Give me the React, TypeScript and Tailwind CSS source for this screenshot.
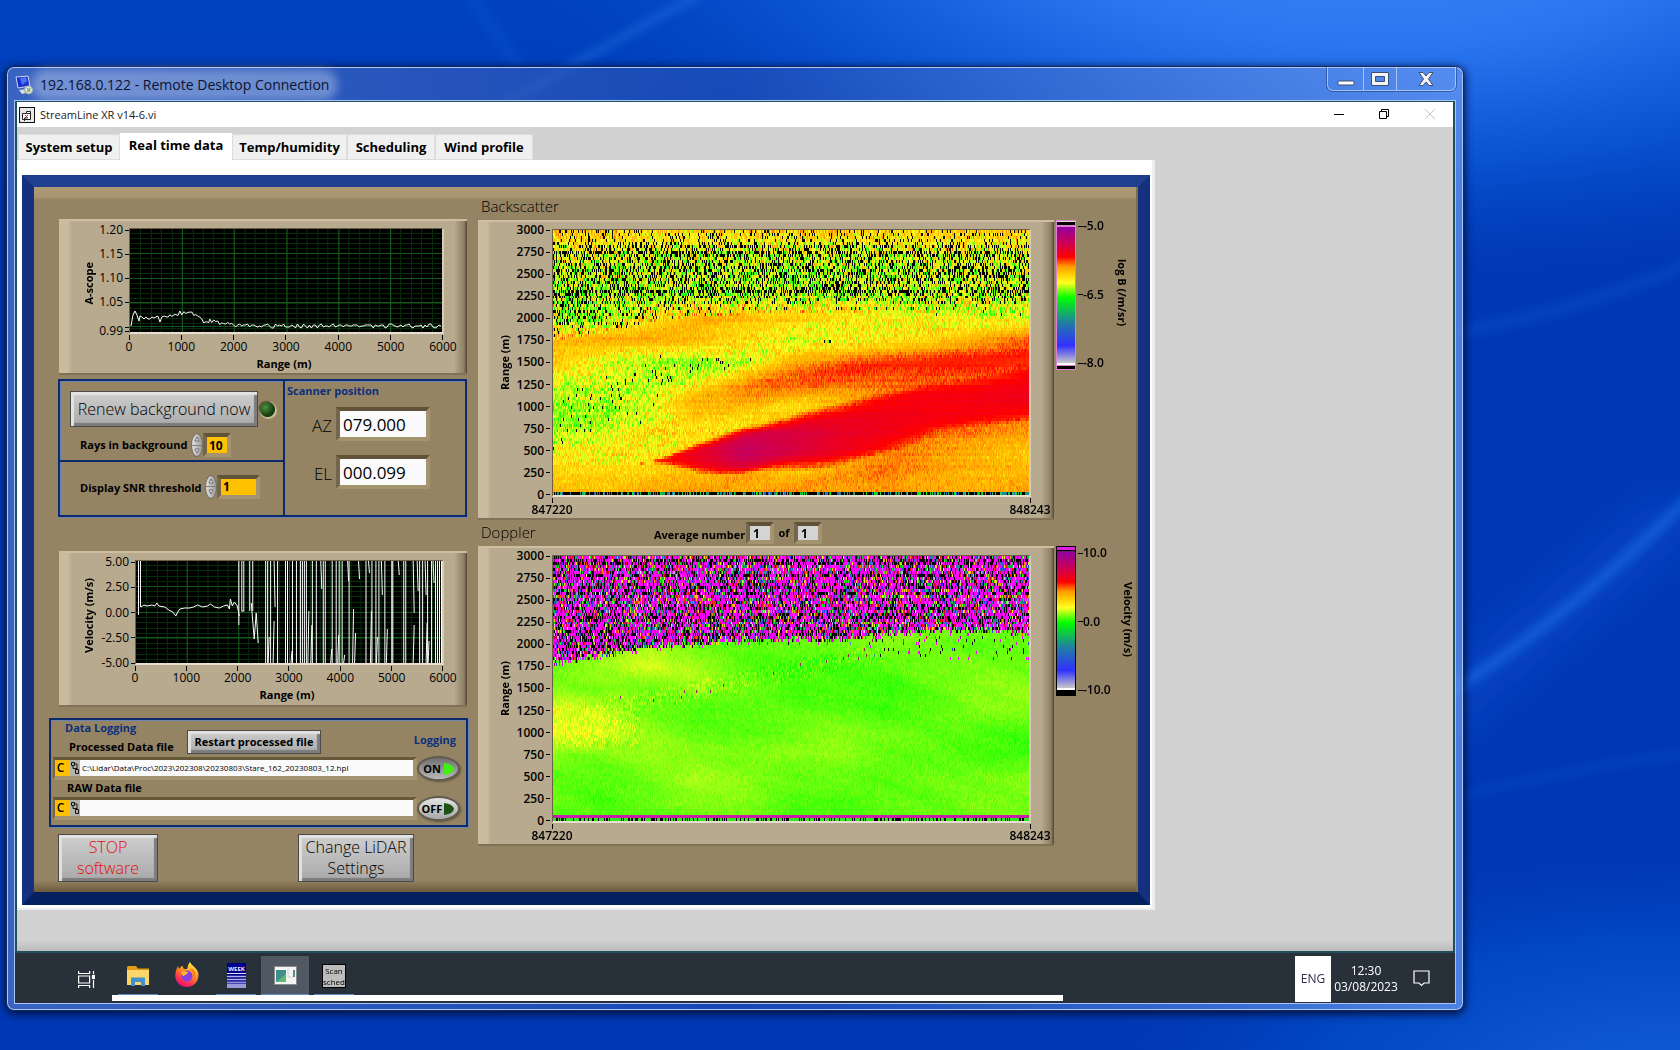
import { useEffect, useRef, type ReactNode } from "react";

/* ---------- colour ramp and synthetic lidar fields ---------- */

type Rgb = [number, number, number];

const RAMP: [number, Rgb][] = [
  [0, [145, 0, 160]],
  [0.1, [200, 0, 90]],
  [0.22, [255, 0, 0]],
  [0.3, [255, 150, 0]],
  [0.35, [255, 200, 0]],
  [0.41, [255, 255, 32]],
  [0.52, [0, 255, 0]],
  [0.7, [32, 128, 160]],
  [0.87, [48, 48, 255]],
  [1, [215, 215, 215]],
];

function ramp(p: number): Rgb {
  const v = Math.min(1, Math.max(0, p));
  for (let i = 1; i < RAMP.length; i++) {
    const [p1, c1] = RAMP[i];
    const [p0, c0] = RAMP[i - 1];
    if (v <= p1) {
      const f = (v - p0) / (p1 - p0);
      return [c0[0] + (c1[0] - c0[0]) * f, c0[1] + (c1[1] - c0[1]) * f, c0[2] + (c1[2] - c0[2]) * f];
    }
  }
  return [215, 215, 215];
}

function lerpTable(t: number[], x: number): number {
  const s = Math.min(1, Math.max(0, x)) * (t.length - 1);
  const i = Math.min(t.length - 2, Math.floor(s));
  return t[i] + (t[i + 1] - t[i]) * (s - i);
}

function grid(rows: number[][], x: number, range: number): number {
  const s = (range / 3000) * (rows.length - 1);
  const i = Math.min(rows.length - 2, Math.max(0, Math.floor(s)));
  const a = lerpTable(rows[i], x);
  const b = lerpTable(rows[i + 1], x);
  return a + (b - a) * (s - i);
}

/* rows every 250 m, ground first; columns every 10 % of the time axis */
const BACKSCATTER = [
  [0.32, 0.33, 0.31, 0.31, 0.31, 0.3, 0.31, 0.31, 0.33, 0.33, 0.3],
  [0.37, 0.37, 0.36, 0.34, 0.33, 0.35, 0.32, 0.29, 0.31, 0.34, 0.34],
  [0.4, 0.4, 0.38, 0.35, 0.33, 0.32, 0.3, 0.29, 0.3, 0.32, 0.34],
  [0.45, 0.43, 0.39, 0.38, 0.37, 0.35, 0.32, 0.29, 0.28, 0.29, 0.31],
  [0.47, 0.47, 0.42, 0.36, 0.37, 0.37, 0.35, 0.3, 0.28, 0.27, 0.27],
  [0.42, 0.43, 0.43, 0.41, 0.35, 0.3, 0.29, 0.28, 0.27, 0.27, 0.27],
  [0.35, 0.4, 0.45, 0.46, 0.42, 0.36, 0.33, 0.31, 0.29, 0.28, 0.27],
  [0.35, 0.33, 0.32, 0.34, 0.39, 0.43, 0.42, 0.4, 0.37, 0.34, 0.29],
  [0.45, 0.44, 0.37, 0.33, 0.33, 0.35, 0.37, 0.39, 0.41, 0.4, 0.41],
  [0.46, 0.45, 0.44, 0.43, 0.44, 0.44, 0.44, 0.43, 0.43, 0.43, 0.42],
  [0.43, 0.43, 0.43, 0.43, 0.44, 0.44, 0.43, 0.43, 0.42, 0.42, 0.42],
  [0.41, 0.41, 0.42, 0.42, 0.42, 0.42, 0.42, 0.42, 0.41, 0.41, 0.4],
  [0.35, 0.35, 0.36, 0.36, 0.36, 0.36, 0.36, 0.36, 0.36, 0.36, 0.36],
];

const DOPPLER = [
  [0.48, 0.49, 0.48, 0.48, 0.48, 0.49, 0.49, 0.48, 0.48, 0.47, 0.47],
  [0.48, 0.49, 0.48, 0.46, 0.46, 0.48, 0.49, 0.48, 0.48, 0.47, 0.47],
  [0.48, 0.48, 0.47, 0.45, 0.46, 0.48, 0.47, 0.48, 0.47, 0.47, 0.46],
  [0.46, 0.47, 0.45, 0.46, 0.47, 0.46, 0.46, 0.48, 0.48, 0.49, 0.5],
  [0.42, 0.42, 0.46, 0.48, 0.48, 0.47, 0.46, 0.47, 0.48, 0.49, 0.49],
  [0.42, 0.43, 0.47, 0.49, 0.48, 0.48, 0.48, 0.49, 0.48, 0.46, 0.46],
  [0.46, 0.47, 0.47, 0.45, 0.47, 0.49, 0.49, 0.5, 0.48, 0.46, 0.46],
  [0.48, 0.45, 0.43, 0.45, 0.48, 0.49, 0.49, 0.48, 0.47, 0.47, 0.47],
  [0.47, 0.46, 0.44, 0.48, 0.48, 0.48, 0.47, 0.46, 0.47, 0.48, 0.48],
  [0.46, 0.46, 0.46, 0.46, 0.46, 0.46, 0.46, 0.46, 0.46, 0.46, 0.46],
  [0.46, 0.46, 0.46, 0.46, 0.46, 0.46, 0.46, 0.46, 0.46, 0.46, 0.46],
];

const PLUME_CENTRE = [300, 340, 370, 420, 500, 580, 680, 820, 980, 1080, 1160];
const PLUME_HALF = [0, 0, 10, 150, 215, 235, 300, 340, 350, 330, 310];
const PLUME_PEAK = [0.3, 0.3, 0.25, 0.18, 0.1, 0.13, 0.17, 0.19, 0.2, 0.2, 0.19];
const BAND_CENTRE = [1000, 1000, 1020, 1080, 1180, 1370, 1440, 1490, 1530, 1560, 1600];
const BAND_DEPTH = [0, 0, 0, 0.04, 0.06, 0.06, 0.065, 0.065, 0.055, 0.05, 0.04];
const NOISE_FLOOR = [1780, 1870, 1960, 2000, 2030, 2040, 2050, 2100, 2150, 2150, 2120];
const NOISE_TOP = [1750, 1820, 1950, 2020, 2040, 2050, 2050, 2080, 2060, 2030, 2060];

const COLS = 478;
const ROWS = 89;

function makeRandom(seed: number) {
  let s = seed;
  return () => {
    s = (s * 1664525 + 1013904223) % 4294967296;
    return s / 4294967296;
  };
}

function wisps(x: number, range: number, slope: number): number {
  const u = range - slope * x;
  return (
    Math.sin(u / 61 + 3 * Math.sin(x * 7)) * 0.45 +
    Math.sin(u / 113 + 2.2 * Math.sin(x * 11 + 1)) * 0.35 +
    Math.sin(u / 33 + 4 * Math.sin(x * 5 + 2)) * 0.2
  );
}

type Kind = "backscatter" | "doppler";

function cellColour(kind: Kind, x: number, row: number, rnd: () => number, rowBias: number): Rgb {
  const range = 3000 * (1 - (row + 0.5) / ROWS);
  const n = rnd() + rnd() - 1;
  if (kind === "backscatter") {
    if (row === ROWS - 1) return rnd() < 0.55 ? [0, 0, 0] : ramp(0.52 + rnd() * 0.25);
    const above = (range - lerpTable(NOISE_TOP, x)) / 200;
    let p = grid(BACKSCATTER, x, range);
    const band = Math.abs(range - lerpTable(BAND_CENTRE, x)) / 200;
    p -= lerpTable(BAND_DEPTH, x) * Math.exp(-band * band * 1.2);
    p = Math.max(p, 0.24);
    if (above < 0.5) p += wisps(x, range, 900) * 0.012;
    const half = lerpTable(PLUME_HALF, x);
    if (half > 8) {
      const d = Math.abs(range - lerpTable(PLUME_CENTRE, x) + wisps(x, range, 900) * 30) / half;
      p = Math.min(p, lerpTable(PLUME_PEAK, x) + 0.09 * Math.pow(d, 3));
    }
    let amp = p > 0.375 ? 0.08 : p > 0.24 ? 0.04 : 0.012;
    let hole = p > 0.43 ? 0.035 : p > 0.41 ? 0.012 : 0;
    if (above > 0) {
      amp = 0.14;
      hole = Math.min(0.28, above * 0.2) + rowBias * 0.08;
      if (range > 2820) {
        hole *= 0.5;
        amp = 0.1;
      }
      if (row === 20 || row === 7) hole = 0.5;
    }
    if (rnd() < hole) return [0, 0, 0];
    return ramp(p + n * amp + rowBias * 0.008);
  }
  if (row === ROWS - 1) return rnd() < 0.35 ? [0, 0, 0] : [48, 230, 32];
  if (row === ROWS - 2) return [200, 30, 170];
  const floor = lerpTable(NOISE_FLOOR, x) + n * 60;
  const thin = x > 0.66 && range > 1800 + (1 - x) * 200 && rnd() < 0.07;
  if (range > floor || thin) {
    const r = rnd();
    if (r < 0.4) return [255, 0, 255];
    if (r < 0.67 + rowBias * 0.15) return [0, 0, 0];
    return ramp(rnd());
  }
  const speckle = Math.abs(range - (1150 + x * 1100)) < 110 && x > 0.1 && x < 0.7;
  if (speckle && rnd() < 0.01) return [150, 40, 90];
  const yellow = x < 0.18 && range > 850 && range < 1350;
  const p = grid(DOPPLER, x, Math.min(3000, range * 1.2)) + wisps(x, range, -1400) * 0.006;
  return ramp(p + n * (speckle || yellow ? 0.035 : 0.016));
}

function HeatMap({ kind, label }: { kind: Kind; label: string }) {
  const ref = useRef<HTMLCanvasElement>(null);
  useEffect(() => {
    const ctx = ref.current?.getContext("2d");
    if (!ctx) return;
    const rnd = makeRandom(kind === "doppler" ? 91 : 17);
    const img = ctx.createImageData(COLS, ROWS);
    for (let y = 0; y < ROWS; y++) {
      const bias = rnd() * 2 - 1;
      for (let x = 0; x < COLS; x++) {
        const c = cellColour(kind, x / COLS, y, rnd, bias);
        const o = (y * COLS + x) * 4;
        img.data[o] = c[0];
        img.data[o + 1] = c[1];
        img.data[o + 2] = c[2];
        img.data[o + 3] = 255;
      }
    }
    ctx.putImageData(img, 0, 0);
  }, [kind]);
  return (
    <canvas
      ref={ref}
      width={COLS}
      height={ROWS}
      role="img"
      aria-label={label}
      className="h-[268px] w-full border-t border-l border-[#6b5f48] border-r-2 border-r-[#d6cdb8] border-b-2 border-b-[#e6e0d0] [image-rendering:pixelated]"
    />
  );
}

/* ---------- instrument chrome ---------- */

const PANEL =
  "border-t-2 border-b-2 border-t-[#cdbf9f] border-b-[#807256] bg-[linear-gradient(90deg,#c9bb9d_0,#c9bb9d_9px,#b7aa8e_13px,#b7aa8e_calc(100%_-_13px),#8d8064_calc(100%_-_3px),#4f4634_100%)]";
const STEEL =
  "border border-[#4a4a4a] bg-linear-to-b from-[#cfcfcf] to-[#a9a9a9] shadow-[inset_3px_3px_1px_#e2e2e2,inset_-3px_-3px_1px_#7c7c7c]";
const WELL = "border-4 border-t-[#5f5238] border-l-[#73664a] border-r-[#a3946f] border-b-[#a3946f]";

function XAxis({ labels }: { labels: string[] }) {
  return (
    <div className="flex justify-between pt-px pr-px">
      {labels.map((l) => (
        <div key={l} className="flex w-0 flex-col items-center">
          <span className="h-[5px] w-px shrink-0 bg-black" />
          <span className="text-xs leading-[14px]">{l}</span>
        </div>
      ))}
    </div>
  );
}

function YLabel({ text, bold }: { text: string; bold?: boolean }) {
  return (
    <div className={`flex h-4 items-center justify-end gap-[2px] text-xs leading-4 ${bold ? "font-semibold" : ""}`}>
      <span>{text}</span>
      <span className="h-px w-1 bg-black" />
    </div>
  );
}

function VText({ children, down }: { children: ReactNode; down?: boolean }) {
  return (
    <span
      className={`text-[11px] leading-4 font-bold whitespace-nowrap [writing-mode:vertical-rl] ${down ? "" : "rotate-180"}`}
    >
      {children}
    </span>
  );
}

function PlotGrid({ w, h, minorX, major, minorPer }: { w: number; h: number; minorX: number; major: number[]; minorPer: number }) {
  const lines: ReactNode[] = [];
  const step = major[1] - major[0];
  for (let y = major[0] - step; y < h; y += step / minorPer)
    if (y > 0) lines.push(<path key={`h${y}`} d={`M0 ${Math.round(y) + 0.5}H${w}`} stroke="#062c09" />);
  for (let i = 1; i < minorX; i++) {
    const x = Math.round((w * i) / minorX) + 0.5;
    lines.push(<path key={`v${i}`} d={`M${x} 0V${h}`} stroke={i % 5 === 0 ? "#166b1c" : "#082e0b"} />);
  }
  major.forEach((y) => lines.push(<path key={`m${y}`} d={`M0 ${y + 0.5}H${w}`} stroke="#15591a" />));
  return <g shapeRendering="crispEdges">{lines}</g>;
}

const PLOT =
  "block w-full border-t border-l border-[#6b5f48] border-r-2 border-r-[#d6cdb8] border-b-2 border-b-[#e6e0d0] bg-black";

function scopeTrace(): string {
  const rnd = makeRandom(5);
  const pts: string[] = ["1,97", "3,86", "5,82", "7,86", "9,92", "10,87"];
  const key: [number, number][] = [[12, 89], [28, 89], [30, 92], [34, 88], [44, 86], [50, 84], [62, 83], [68, 87], [75, 94], [80, 91], [92, 94], [104, 97], [313, 97]];
  for (let i = 1; i < key.length; i++) {
    const [x0, y0] = key[i - 1];
    const [x1, y1] = key[i];
    for (let x = x0; x < x1; x += 2) {
      const y = y0 + ((y1 - y0) * (x - x0)) / (x1 - x0) + Math.round((rnd() - 0.5) * 4);
      pts.push(`${x},${y}`);
    }
  }
  return pts.join(" ");
}

function AScope() {
  return (
    <section className={`flex h-[156px] pl-[22px] ${PANEL}`}>
      <div className="flex h-[124px] w-4 items-center justify-center">
        <VText>A-scope</VText>
      </div>
      <div className="w-8 pt-px">
        <div className="flex h-[88px] flex-col justify-between">
          {["1.20", "1.15", "1.10", "1.05"].map((l) => (
            <YLabel key={l} text={l} />
          ))}
        </div>
        <div className="mt-[13px] flex h-4 items-center justify-end gap-[2px] text-xs leading-4">
          <span>0.99</span>
          <span className="flex flex-col gap-[3px] pb-1">
            <span className="h-px w-1 bg-black" />
            <span className="h-px w-1 bg-black" />
          </span>
        </div>
      </div>
      <div className="mr-[23px] flex-1 pt-[7px]">
        <svg viewBox="0 0 313 103" preserveAspectRatio="none" className={`h-[106px] ${PLOT}`} role="img" aria-label="A-scope trace">
          <PlotGrid w={313} h={103} minorX={30} major={[24, 49, 73, 97]} minorPer={5} />
          <polyline points={scopeTrace()} fill="none" stroke="#fff" strokeWidth="1" />
        </svg>
        <XAxis labels={["0", "1000", "2000", "3000", "4000", "5000", "6000"]} />
        <p className="pt-[2px] pr-[5px] text-center text-[11px] leading-4 font-bold">Range (m)</p>
      </div>
    </section>
  );
}

const FULL_BARS = [
  2, 4, 103, 106, 108, 114, 117, 130, 132, 135, 142, 150, 152, 157, 161, 165, 167, 169, 171, 177, 181, 188, 190, 197,
  201, 204, 207, 214, 231, 237, 241, 244, 250, 257, 258, 269, 271, 285, 288, 293, 297, 301, 303, 305, 307,
];
const TOP_BARS: [number, number][] = [
  [139, 46], [186, 28], [213, 20], [224, 18], [234, 12], [247, 34], [264, 14], [279, 52], [283, 30], [291, 34], [299, 22],
];
const LOW_BARS: [number, number][] = [
  [133, 76], [138, 60], [156, 90], [173, 50], [176, 64], [196, 88], [203, 74], [209, 94], [218, 48], [220, 72], [236, 50],
  [242, 76], [252, 68], [279, 64], [292, 62], [294, 80],
];

function Velocity() {
  return (
    <section className={`flex h-[156px] pl-[22px] ${PANEL}`}>
      <div className="flex h-[124px] w-4 items-center justify-center">
        <VText>Velocity (m/s)</VText>
      </div>
      <div className="w-[38px] pt-px">
        <div className="flex h-[117px] flex-col justify-between">
          {["5.00", "2.50", "0.00", "-2.50", "-5.00"].map((l) => (
            <YLabel key={l} text={l} />
          ))}
        </div>
      </div>
      <div className="mr-[23px] flex-1 pt-[7px]">
        <svg viewBox="0 0 308 102" preserveAspectRatio="none" className={`h-[105px] ${PLOT}`} role="img" aria-label="Velocity trace">
          <PlotGrid w={308} h={102} minorX={30} major={[25, 51, 76]} minorPer={5} />
          <g stroke="#fff" strokeWidth="1" fill="none">
            {FULL_BARS.map((x) => (
              <path key={x} d={x === 2 ? "M2.5 0V54" : x === 4 ? "M4.5 0V46" : x < 120 ? `M${x}.5 0V${x === 103 ? 64 : 50}` : `M${x}.5 0V102`} shapeRendering="crispEdges" />
            ))}
            {TOP_BARS.map(([x, y]) => (
              <path key={x} d={`M${x} 0L${x + 1} ${y}`} shapeRendering="crispEdges" />
            ))}
            {LOW_BARS.map(([x, y]) => (
              <path key={x} d={`M${x + 1} ${y}L${x} 102`} shapeRendering="crispEdges" />
            ))}
            <path d="M5 46l3-2 3 1 5-1 3 1 2-3 2 3 6 1 4 3 4 2 3 4 2-4 2-3 5-1h5l4-1 4-2 5 2 5-1 3-2 4 3 5 1 4-2 4-1 2 4 1-10 2 7 2-4 3 4 2 10" />
            <path d="M106 50h3M116 42l3 36 2-26 2 30" />
          </g>
        </svg>
        <XAxis labels={["0", "1000", "2000", "3000", "4000", "5000", "6000"]} />
        <p className="pt-[2px] pr-[5px] text-center text-[11px] leading-4 font-bold">Range (m)</p>
      </div>
    </section>
  );
}

const FRAME = "border-2 border-[#0b2a6e] shadow-[inset_1px_1px_0_#6c83b4,1px_1px_0_#6c83b4]";

function Spinner({ label }: { label: string }) {
  return (
    <div className="flex h-6 w-3 flex-col overflow-hidden rounded-[50%] border border-[#77705f] bg-linear-to-r from-[#e0e0e0] to-[#9c9c9c]">
      <button type="button" aria-label={`Increase ${label}`} className="flex flex-1 items-center justify-center border-b border-[#808080]">
        <svg viewBox="0 0 6 6" className="size-[6px]"><path d="M3 1L5 5H1z" fill="#eee" stroke="#555" strokeWidth=".8" /></svg>
      </button>
      <button type="button" aria-label={`Decrease ${label}`} className="flex flex-1 items-center justify-center">
        <svg viewBox="0 0 6 6" className="size-[6px]"><path d="M3 5L5 1H1z" fill="#eee" stroke="#555" strokeWidth=".8" /></svg>
      </button>
    </div>
  );
}

function Controls() {
  return (
    <section className={`flex h-[138px] ${FRAME}`}>
      <div className="flex w-[225px] flex-col border-r-2 border-[#0b2a6e]">
        <div className="h-[81px] border-b-2 border-[#0b2a6e] pt-[10px] pl-[10px]">
          <div className="flex items-center gap-[2px]">
            <button type="button" className={`h-9 w-[188px] text-base leading-4 font-light whitespace-nowrap ${STEEL}`}>
              Renew background now
            </button>
            <span className="size-[15px] rounded-full bg-[radial-gradient(circle_at_35%_35%,#4f9040,#14400f_60%,#0b2808)] shadow-[1px_1px_1px_1px_#cbbd96,-1px_-1px_1px_#4a4028]" />
          </div>
          <div className="flex items-center pt-[6px] pl-[10px]">
            <label htmlFor="rays" className="w-[111px] text-[11px] font-bold whitespace-nowrap">Rays in background</label>
            <Spinner label="rays in background" />
            <input id="rays" defaultValue="10" className={`h-6 w-7 bg-[#ffc000] pl-[2px] text-xs font-bold ${WELL}`} />
          </div>
        </div>
        <div className="flex flex-1 items-center pb-1 pl-5">
          <label htmlFor="snr" className="w-[125px] pt-1 text-[11px] font-bold whitespace-nowrap">Display SNR threshold</label>
          <Spinner label="display SNR threshold" />
          <input id="snr" defaultValue="1" className={`h-6 w-[43px] bg-[#ffc000] pl-[2px] text-xs font-bold ${WELL}`} />
        </div>
      </div>
      <div className="flex-1 pl-[2px]">
        <h2 className="pt-[2px] text-[11px] leading-4 font-bold text-[#0c2f7d]">Scanner position</h2>
        {[
          ["AZ", "079.000"],
          ["EL", "000.099"],
        ].map(([k, v]) => (
          <div key={k} className={`flex items-center gap-1 ${k === "AZ" ? "pt-2" : "pt-[14px]"}`}>
            <label htmlFor={k} className="w-[45px] pt-1 text-right text-[17px] leading-6 font-light">{k}</label>
            <input id={k} readOnly value={v} className={`h-[34px] w-[94px] bg-[#fafafa] pl-[3px] text-[17px] leading-6 ${WELL}`} />
          </div>
        ))}
      </div>
    </section>
  );
}

function FileRow({ id, value, on }: { id: string; value: string; on: boolean }) {
  return (
    <div className="flex h-[25px] items-center">
      <div className="flex h-[23px] flex-1 border-t-[3px] border-r-4 border-b-4 border-l-2 border-t-[#665939] border-r-[#a3946f] border-b-[#a3946f] border-l-[#73664a] bg-[#958464]">
        <button type="button" aria-label={`Choose drive for ${id}`} className="w-[15px] bg-[#ffc000] pr-1 text-xs leading-4 font-semibold">C</button>
        <svg viewBox="0 0 10 16" className="h-4 w-[10px] bg-[#b5b2aa]" aria-hidden="true">
          <path d="M1.500 2.500h3v3h-3zM5.500 9.500h3v4h-3zM4.500 4h2.500v5.500M3 5.500v3h4" fill="none" stroke="#111" strokeWidth="1" />
        </svg>
        <input id={id} readOnly value={value} className="h-4 min-w-0 flex-1 bg-[#fafafa] pl-[2px] text-[8px] leading-4 font-medium" />
      </div>
      <button
        type="button"
        aria-pressed={on}
        className={`flex h-[25px] w-[43px] items-center rounded-[50%] border-2 border-[#5e5a50] pl-[2px] font-bold ${on ? "bg-linear-to-b from-[#6f6f6f] to-[#b9b9b9]" : "bg-linear-to-b from-[#e6e6e6] to-[#a8a8a8]"} shadow-[1px_1px_2px_#5f5238]`}
      >
        <span className="w-[22px] text-center text-[11px] leading-4">{on ? "ON" : "OFF"}</span>
        <svg viewBox="0 0 12 14" className="h-[14px] w-3" aria-hidden="true">
          <path d="M1 1Q10 2 11 7Q10 12 1 13z" fill={on ? "#3ff010" : "#1c5214"} />
        </svg>
      </button>
    </div>
  );
}

function Logging() {
  return (
    <section className={`h-[109px] pr-[6px] pl-[2px] ${FRAME}`}>
      <div className="flex h-9 items-end">
        <div className="h-full w-[134px] pl-3">
          <h2 className="text-[11px] leading-4 font-bold text-[#0c2f7d]">Data Logging</h2>
          <label htmlFor="processed" className="block pt-[3px] pl-1 text-[11px] leading-4 font-bold whitespace-nowrap">Processed Data file</label>
        </div>
        <button type="button" className={`mb-[2px] h-6 w-[134px] text-[11px] leading-4 font-bold whitespace-nowrap ${STEEL}`}>
          Restart processed file
        </button>
        <span className="mr-1 mb-2 ml-auto text-[11px] leading-4 font-bold text-[#0c2f7d]">Logging</span>
      </div>
      <FileRow id="processed" value="C:\Lidar\Data\Proc\2023\202308\20230803\Stare_162_20230803_12.hpl" on />
      <label htmlFor="raw" className="block h-[15px] pl-[14px] text-[11px] leading-[14px] font-bold">RAW Data file</label>
      <FileRow id="raw" value="" on={false} />
    </section>
  );
}

const RANGES = ["3000", "2750", "2500", "2250", "2000", "1750", "1500", "1250", "1000", "750", "500", "250", "0"];

function MapPanel({ kind, label, top, bar, ticks, unit, unitPad, barClass }: {
  kind: Kind; label: string; top: string; bar: ReactNode; ticks: string[]; unit: string; unitPad: string; barClass: string;
}) {
  return (
    <div className="flex">
      <section className={`flex h-[300px] flex-1 pl-[19px] ${PANEL}`}>
        <div className="flex h-[280px] w-4 items-center justify-center">
          <VText>{label}</VText>
        </div>
        <div className="flex h-[281px] w-[37px] flex-col justify-between">
          {RANGES.map((r) => (
            <YLabel key={r} text={r} bold />
          ))}
        </div>
        <div className="mr-[23px] ml-[2px] flex-1 pt-[7px]">
          <HeatMap kind={kind} label={top} />
          <div className="font-semibold">
            <XAxis labels={["847220", "848243"]} />
          </div>
        </div>
      </section>
      <div className="flex w-[82px] pl-[2px]">
        {bar}
        <div className={`flex h-[153px] w-9 flex-col justify-between pl-[2px] text-xs leading-4 font-semibold ${barClass}`}>
          {ticks.map((t) => (
            <div key={t} className="flex items-center">
              <span className="h-px w-[5px] shrink-0 bg-black" />
              <span className="whitespace-nowrap">{t}</span>
            </div>
          ))}
        </div>
        <div className={`flex h-[146px] items-center ${unitPad}`}>
          <VText down>{unit}</VText>
        </div>
      </div>
    </div>
  );
}

const BAR_FILL =
  "bg-[linear-gradient(180deg,#9100a0_0%,#c8005a_11%,#ff0000_22%,#ff9a00_29%,#ffc800_34%,#ffff20_41%,#00ff00_52%,#2080a0_70%,#3030ff_87%,#c8c8c8_100%)]";

function Instrument() {
  return (
    <div className="border-[12px] border-b-[13px] border-t-[#20408f] border-r-[#15307f] border-b-[#04205f] border-l-[#15307f] shadow-[inset_0_1px_0_#000]">
      <div className="flex gap-[10px] border-r-2 border-[#7b6c4c] bg-[linear-gradient(180deg,#ad9b75_0,#a79570_10px,#958464_13px,#958464_calc(100%_-_12px),#6a5a3a_100%)] pb-[10px] pl-[15px] text-black">
        <div className="flex w-[419px] flex-col">
          <div className="mr-px ml-[10px] pt-8">
            <AScope />
          </div>
          <div className="mt-1 mr-px ml-[9px]">
            <Controls />
          </div>
          <div className="mt-[34px] mr-px ml-[10px]">
            <Velocity />
          </div>
          <div className="mt-[11px]">
            <Logging />
          </div>
          <div className="mt-[7px] mr-[54px] ml-[9px] flex justify-between">
            <button type="button" className={`h-12 w-[100px] text-base leading-[21px] font-light text-[#e01010] ${STEEL}`}>
              STOP<br />software
            </button>
            <button type="button" className={`h-12 w-[116px] text-base leading-[21px] font-light ${STEEL}`}>
              Change LiDAR<br />Settings
            </button>
          </div>
        </div>
        <div className="flex-1">
          <h2 className="h-[33px] pt-[9px] pl-[3px] text-[15px] leading-5 font-light">Backscatter</h2>
          <MapPanel
            kind="backscatter" label="Range (m)" top="Backscatter time-height plot" ticks={["-5.0", "-6.5", "-8.0"]} unit="log B (/m/sr)" barClass="-mt-[2px]" unitPad="pl-[2px]"
            bar={
              <div className="flex h-[150px] w-5 flex-col border border-[#e080d0]">
                <span className="h-1 border-t border-[#ddd] bg-black" />
                <span className="h-[2px] bg-[#e080d0]" />
                <span className={`flex-1 ${BAR_FILL}`} />
                <span className="h-[2px] bg-white" />
                <span className="h-px bg-[#e080d0]" />
                <span className="h-[3px] bg-black" />
              </div>
            }
          />
          <div className="flex h-[26px] items-center">
            <h2 className="w-[176px] pb-[2px] pl-[3px] text-[15px] leading-5 font-light">Doppler</h2>
            <label htmlFor="avg" className="w-[92px] pt-1 text-[11px] leading-4 font-bold whitespace-nowrap">Average number</label>
            <input id="avg" readOnly value="1" className={`h-[22px] w-7 bg-[#d4d4d4] pl-[3px] text-xs leading-3 font-bold ${WELL}`} />
            <label htmlFor="total" className="w-5 text-center text-[11px] leading-4 font-bold">of</label>
            <input id="total" readOnly value="1" className={`h-[22px] w-7 bg-[#d4d4d4] pl-[3px] text-xs leading-3 font-bold ${WELL}`} />
          </div>
          <MapPanel
            kind="doppler" label="Range (m)" top="Doppler time-height plot" ticks={["10.0", "0.0", "-10.0"]} unit="Velocity (m/s)" barClass="-mt-px" unitPad="pl-2"
            bar={
              <div className="flex h-[150px] w-5 flex-col border border-black">
                <span className="h-[3px] bg-[#e020e0]" />
                <span className="h-[2px] border-t border-black bg-[#6a1a6a]" />
                <span className={`flex-1 ${BAR_FILL}`} />
                <span className="h-[2px] bg-white" />
                <span className="h-[5px] bg-black" />
              </div>
            }
          />
        </div>
      </div>
    </div>
  );
}

/* ---------- windows and desktop ---------- */

const TABS: [string, string][] = [
  ["System setup", "w-[102px]"],
  ["Real time data", "w-[112px]"],
  ["Temp/humidity", "w-[115px]"],
  ["Scheduling", "w-[88px]"],
  ["Wind profile", "w-[98px]"],
];

function Tabs() {
  return (
    <div role="tablist" className="flex h-[27px] items-end pl-px">
      {TABS.map(([t, w]) =>
        t === "Real time data" ? (
          <button key={t} role="tab" aria-selected="true" type="button" className={`h-[27px] bg-white pb-1 text-[13px] leading-5 font-bold whitespace-nowrap ${w}`}>
            {t}
          </button>
        ) : (
          <button key={t} role="tab" aria-selected="false" type="button" className={`h-[26px] border border-b-[#ddd] border-[#dcdcdc] bg-[#f0f0f0] text-[13px] leading-5 font-bold whitespace-nowrap ${w}`}>
            {t}
          </button>
        ),
      )}
    </div>
  );
}

function Taskbar() {
  return (
    <footer className="-mx-[2px] flex h-[50px] items-start bg-[#28303a] text-white">
      <div className="relative flex h-full flex-1 pt-[3px]">
        <button type="button" aria-label="Task view" className="mr-[22px] ml-[61px] flex w-5 items-center justify-center">
          <svg viewBox="0 0 17 17" className="size-[17px]" fill="none" stroke="#fff" strokeWidth="1.200">
            <path d="M.6 0v2.500h11V0M.6 17v-2.500h11V17M.6 5h11v7H.6zM15.500 0v3M15.500 9v8" />
            <rect x="14.500" y="4.500" width="2" height="3" fill="#fff" />
          </svg>
        </button>
        <button type="button" aria-label="File Explorer" className="h-10 w-10 border-b-2 border-[#5d8fc7] pt-px">
          <svg viewBox="0 0 22 20" className="mx-auto h-5 w-[22px]">
            <path d="M0 1.500Q0 0 1.500 0H9l2 2.500h11V19H0z" fill="#e39a14" />
            <path d="M0 4h22v15H0z" fill="#fbd76b" />
            <path d="M4 20v-8.500h14V20h-4v-4H8v4z" fill="#3f92cd" />
          </svg>
        </button>
        <button type="button" aria-label="Firefox" className="ml-[9px] h-10 w-10 pb-1">
          <svg viewBox="0 0 24 25" className="mx-auto h-[25px] w-6">
            <defs>
              <linearGradient id="fox" x1=".8" y1="0" x2=".3" y2="1">
                <stop offset="0" stopColor="#fff44f" />
                <stop offset=".4" stopColor="#ff9a1c" />
                <stop offset=".75" stopColor="#ff3750" />
                <stop offset="1" stopColor="#eb0878" />
              </linearGradient>
            </defs>
            <path d="M15 0c1 3 6 5 8 10 2 7-3 15-11 15S-1 18 .5 11C1 8 2 6 3 4l1 3c1-1 2-3 4-3-.3 1 0 2 1 3h3c1-3 1-5 3-7z" fill="url(#fox)" />
            <circle cx="12" cy="14" r="5.500" fill="#8a3fe0" />
            <path d="M6 10c3-2 5 0 7 0 0 2-2 2-3 3-1 2-3 1-4-3z" fill="#ffb52b" />
            <path d="M14 8c4 1 6 5 3 9 4-1 5-8 0-10z" fill="#ff7a1f" />
          </svg>
        </button>
        <button type="button" aria-label="Week scan scheduler" className="ml-[9px] h-10 w-10 border-b-2 border-[#5d8fc7]">
          <svg viewBox="0 0 19 25" className="mx-auto h-[25px] w-[19px]">
            <rect width="19" height="25" fill="#00008c" />
            <path d="M0 10.500h19" stroke="#dcdcf5" strokeWidth="1" />
            <path d="M0 13.500h19M0 16.500h19" stroke="#b4b4e8" strokeWidth="1.500" />
            <path d="M0 19.500h19" stroke="#8c8cdc" strokeWidth="2" />
            <path d="M0 23h19" stroke="#9a9ad8" strokeWidth="4" />
            <text x="9.500" y="7.500" textAnchor="middle" fontSize="6" fontWeight="700" fill="#e8e8ff">WEEK</text>
          </svg>
        </button>
        <button type="button" aria-label="LabVIEW application" className="ml-[5px] h-10 w-12 border-b-2 border-[#5d8fc7] bg-[#505963]">
          <svg viewBox="0 0 23 19" className="mx-auto h-[19px] w-[23px]">
            <rect x=".5" y=".5" width="22" height="18" fill="#f4f4f4" stroke="#8a8a8a" />
            <rect x="2" y="4" width="10" height="12" fill="#3f8f8a" />
            <path d="M2 16L12 8v8z" fill="#62b67a" />
            <path d="M14 3v8h5" stroke="#d0d0d0" fill="none" />
            <rect x="19" y="4" width="2" height="7" fill="#4a8f98" />
          </svg>
        </button>
        <button type="button" aria-label="Scan sched" className="ml-[5px] flex h-10 w-10 justify-center border-b-2 border-[#5d8fc7] pt-2">
          <span className="flex h-6 w-6 flex-col items-center justify-center border border-black bg-[#bdbdbd] text-[8px] leading-[11px] text-black">
            <span>Scan</span>
            <span>sched</span>
          </span>
        </button>
        <span className="absolute right-[232px] bottom-[2px] left-[97px] h-[6px] bg-white" />
      </div>
      <button type="button" className="mt-[3px] h-[46px] w-9 bg-white text-xs text-[#2d2d50]">ENG</button>
      <div className="w-[70px] pt-[10px] text-center text-xs leading-4 whitespace-nowrap">
        <p>12:30</p>
        <p>03/08/2023</p>
      </div>
      <button type="button" aria-label="Notifications" className="mt-[17px] mr-[25px] ml-3">
        <svg viewBox="0 0 17 17" className="size-[17px]" fill="none" stroke="#fff" strokeWidth="1.200">
          <path d="M1 1h15v12h-5l-2.500 2.500L6 13H1z" />
        </svg>
      </button>
    </footer>
  );
}

function Wallpaper() {
  return (
    <svg className="absolute inset-0 -z-10 h-full w-full" viewBox="0 0 1680 1050" preserveAspectRatio="none" aria-hidden="true">
      <defs>
        <linearGradient id="base" x1="0" y1="0" x2="0" y2="1">
          <stop offset="0" stopColor="#0042be" />
          <stop offset=".25" stopColor="#0038b4" />
          <stop offset="1" stopColor="#0038b4" />
        </linearGradient>
        <radialGradient id="glow" gradientUnits="userSpaceOnUse" cx="0" cy="0" r="1" gradientTransform="translate(1370 -90) scale(950 390)">
          <stop offset="0" stopColor="#4288f6" />
          <stop offset=".35" stopColor="#2b76f0" />
          <stop offset=".65" stopColor="#0a55d4" stopOpacity=".9" />
          <stop offset="1" stopColor="#0038b4" stopOpacity="0" />
        </radialGradient>
        <radialGradient id="low" gradientUnits="userSpaceOnUse" cx="0" cy="0" r="1" gradientTransform="translate(1680 1090) scale(620 260)">
          <stop offset="0" stopColor="#1560dc" />
          <stop offset=".6" stopColor="#024ac6" stopOpacity=".8" />
          <stop offset="1" stopColor="#0038b4" stopOpacity="0" />
        </radialGradient>
        <filter id="soft" x="-20%" y="-50%" width="140%" height="200%"><feGaussianBlur stdDeviation="5" /></filter>
        <filter id="wide" x="-20%" y="-50%" width="140%" height="200%"><feGaussianBlur stdDeviation="22" /></filter>
      </defs>
      <rect width="1680" height="1050" fill="url(#base)" />
      <rect width="1680" height="1050" fill="url(#low)" />
      <rect width="1680" height="400" fill="url(#glow)" />
      <path d="M1400 760L1464 690L1680 510" stroke="#0a50d0" strokeWidth="50" fill="none" opacity=".5" filter="url(#wide)" />
      <path d="M1430 705L1464 682Q1580 605 1690 496" stroke="#1663de" strokeWidth="12" fill="none" opacity=".75" filter="url(#soft)" />
      <path d="M1440 334Q1580 312 1700 258" stroke="#0a52cf" strokeWidth="12" fill="none" opacity=".4" filter="url(#soft)" />
      <path d="M1440 799Q1560 768 1700 750" stroke="#0a50cc" strokeWidth="5" fill="none" opacity=".6" filter="url(#soft)" />
      <path d="M500 105Q600 50 700 -6" stroke="#2a78e8" strokeWidth="7" fill="none" opacity=".5" filter="url(#soft)" />
      <path d="M470 -5L520 70" stroke="#1560d8" strokeWidth="16" fill="none" opacity=".2" filter="url(#soft)" />
    </svg>
  );
}

export default function App() {
  return (
    <main className="relative isolate flex min-h-screen overflow-hidden pt-[66px] pr-[216px] pb-[41px] pl-[6px] font-['Open_Sans','Noto_Sans',sans-serif]">
      <Wallpaper />
      <div className="flex flex-1 flex-col rounded-lg border border-[#14285c] bg-linear-to-r from-[#4068c2]/90 via-[#2450b4]/60 to-[#6a9af2]/70 px-[7px] pb-[6px] shadow-[inset_0_0_0_1px_#a9c4f5,0_2px_8px_1px_#00103c]">
        <header className="flex h-[33px] items-start">
          <div className="flex h-[35px] flex-1 items-center gap-1 pl-px">
            <svg viewBox="0 0 18 20" className="h-5 w-[18px]" aria-hidden="true">
              <path d="M1 2L13 1l2 10L3 13z" fill="#1a2fd0" stroke="#cdd6ee" />
              <path d="M5 3l6-1 1 4-5 4z" fill="#4f74f2" />
              <path d="M4 15l8-1 2 3-7 2z" fill="#d8dce6" />
              <circle cx="13.500" cy="15" r="4" fill="#dfe6dc" stroke="#9aa39a" />
              <path d="M12 13l1.500 2-1.500 2M15 13l-1 4" stroke="#3c9a2e" fill="none" />
            </svg>
            <h1 className="rounded-full bg-white/30 px-[3px] text-sm leading-5 text-[#0b1330] shadow-[0_0_8px_6px_rgba(255,255,255,.3)]">
              192.168.0.122 - Remote Desktop Connection
            </h1>
          </div>
          <div className="flex h-6 rounded-b-md border border-t-0 border-white/50 shadow-[0_0_0_1px_rgba(20,50,110,.5)]">
            <button type="button" aria-label="Minimize" className="flex w-9 items-center justify-center border-r border-white/50">
              <svg viewBox="0 0 18 14" className="h-[14px] w-[18px]"><rect x="1" y="9" width="16" height="4" rx="1" fill="#fff" stroke="#3c4f78" /></svg>
            </button>
            <button type="button" aria-label="Maximize" className="flex w-[33px] items-center justify-center border-r border-white/50">
              <svg viewBox="0 0 18 14" className="h-[14px] w-[18px]">
                <path fillRule="evenodd" d="M.5.5h17v13H.500zM4.500 4.500h9v5h-9z" fill="#f4f4f4" stroke="#3c4f78" />
              </svg>
            </button>
            <button type="button" aria-label="Close" className="flex w-[58px] items-center justify-center">
              <svg viewBox="0 0 16 14" className="h-[14px] w-4">
                <path d="M1 .5h4L8 4l3-3.500h4L10.500 7l4.500 6.500h-4L8 10l-3 3.500H1L5.500 7z" fill="#f4f4f4" stroke="#3c4f78" />
              </svg>
            </button>
          </div>
        </header>
        <div className="flex flex-1 flex-col border border-[#a9c4f5] bg-[#20505f] px-[2px] pt-px">
          <div className="flex h-[25px] items-center bg-white text-[#222]">
            <svg viewBox="0 0 16 16" className="ml-[2px] size-4" aria-hidden="true">
              <rect x=".5" y=".5" width="15" height="15" fill="#e8e8e8" stroke="#111" />
              <path d="M3.500 12.500v-6h4v-2h4v8zM5.500 14v-3h3M8 6.500h3" fill="#fff" stroke="#222" />
              <path d="M6 8l3 3M9 8l-3 3" stroke="#d02020" />
            </svg>
            <span className="ml-[5px] flex-1 text-[11px] leading-4">StreamLine XR v14-6.vi</span>
            <div className="flex items-center pb-[2px]">
              <button type="button" aria-label="Minimize application" className="flex h-6 w-[45px] items-center justify-center"><svg viewBox="0 0 10 10" className="size-[10px]"><path d="M0 5.500h10" stroke="#000" /></svg></button>
              <button type="button" aria-label="Restore application" className="flex h-6 w-[46px] items-center justify-center">
                <svg viewBox="0 0 10 10" className="size-[10px]" fill="none" stroke="#000"><path d="M.5 2.500h7v7h-7zM2.500 2.500v-2h7v7h-2" /></svg>
              </button>
              <button type="button" aria-label="Close application" className="flex h-6 w-[46px] items-center justify-center"><svg viewBox="0 0 10 10" className="size-[10px]"><path d="M0 0l10 10M10 0L0 10" stroke="#c4c4c4" /></svg></button>
            </div>
          </div>
          <div className="flex flex-1 flex-col bg-[linear-gradient(180deg,#d2d2d2_0,#d2d2d2_calc(100%_-_12px),#bcbcbc_100%)] pt-[6px]">
            <Tabs />
            <div className="mr-[298px] border-r-[3px] border-b-2 border-[#eee] bg-white pt-[15px] pr-[2px] pb-[3px] pl-[5px]">
              <Instrument />
            </div>
            <div className="min-h-[41px] flex-1" />
          </div>
          <div className="h-[2px]" />
          <Taskbar />
        </div>
      </div>
    </main>
  );
}
